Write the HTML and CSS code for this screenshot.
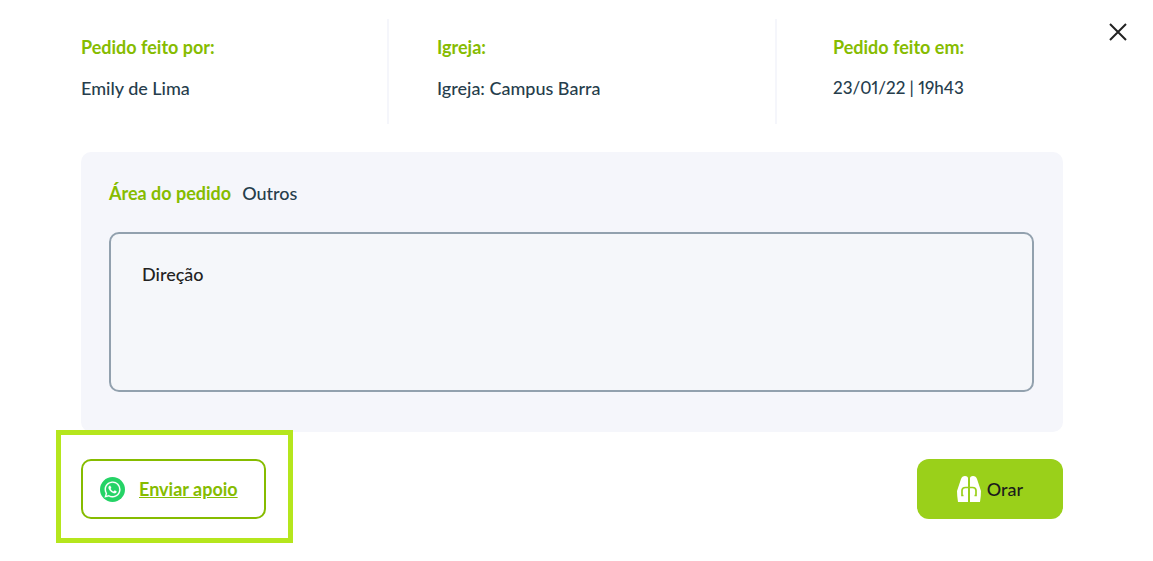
FILE: index.html
```html
<!DOCTYPE html>
<html lang="pt-BR">
<head>
<meta charset="UTF-8" />
<meta name="viewport" content="width=device-width, initial-scale=1.0" />
<title>Pedido de oração</title>
<link rel="stylesheet" href="styles.css">
</head>
<body>
  <main class="modal">
    <button type="button" class="modal-close" aria-label="Fechar">
      <svg width="18" height="18" viewBox="0 0 18 18" fill="none" stroke="currentColor" stroke-width="2"><path d="M1 1l16 16M17 1L1 17"/></svg>
    </button>

    <dl class="info">
      <div class="info-item">
        <dt>Pedido feito por:</dt>
        <dd>Emily de Lima</dd>
      </div>
      <div class="info-item">
        <dt>Igreja:</dt>
        <dd>Igreja: Campus Barra</dd>
      </div>
      <div class="info-item">
        <dt>Pedido feito em:</dt>
        <dd class="date">23/01/22 | 19h43</dd>
      </div>
    </dl>

    <section class="request">
      <div class="area">
        <label class="area-label" for="pedido">Área do pedido</label>
        <span>Outros</span>
      </div>
      <textarea id="pedido" readonly>Direção</textarea>
    </section>

    <div class="actions">
      <div class="highlight">
        <a href="#" class="btn support">
          <!-- whatsapp -->
          <svg width="25" height="25" viewBox="0 0 25 25">
            <circle cx="12.500" cy="12.500" r="12.500" fill="#25d366"/>
            <g transform="translate(4.500 4.500) scale(.670)" fill="#fff" stroke="#fff" stroke-width=".2">
              <path d="M17.472 14.382c-.297-.149-1.758-.867-2.030-.967-.273-.099-.471-.148-.670.150-.197.297-.767.966-.940 1.164-.173.199-.347.223-.644.075-.297-.150-1.255-.463-2.390-1.475-.883-.788-1.480-1.761-1.653-2.059-.173-.297-.018-.458.130-.606.134-.133.298-.347.446-.520.149-.174.198-.298.298-.497.099-.198.050-.371-.025-.520-.075-.149-.669-1.612-.916-2.207-.242-.579-.487-.500-.669-.510-.173-.008-.371-.010-.570-.010-.198 0-.520.074-.792.372-.272.297-1.040 1.016-1.040 2.479 0 1.462 1.065 2.875 1.213 3.074.149.198 2.096 3.200 5.077 4.487.709.306 1.262.489 1.694.625.712.227 1.360.195 1.871.118.571-.085 1.758-.719 2.006-1.413.248-.694.248-1.289.173-1.413-.074-.124-.272-.198-.570-.347"/>
              <path d="M12.051 21.785h-.004a9.870 9.870 0 01-5.031-1.378l-.361-.214-3.741.982.998-3.648-.235-.374a9.860 9.860 0 01-1.510-5.260c.001-5.450 4.436-9.884 9.888-9.884 2.640 0 5.122 1.030 6.988 2.898a9.825 9.825 0 012.893 6.994c-.003 5.450-4.437 9.884-9.885 9.884m8.413-18.297A11.815 11.815 0 0012.050 0C5.495 0 .160 5.335.157 11.892c0 2.096.547 4.142 1.588 5.945L.057 24l6.305-1.654a11.882 11.882 0 005.683 1.448h.005c6.554 0 11.890-5.335 11.893-11.893a11.821 11.821 0 00-3.480-8.413z"/>
            </g>
          </svg>
          <span>Enviar apoio</span>
        </a>
      </div>
      <button type="button" class="btn pray">
        <!-- praying hands -->
        <svg width="24" height="26" viewBox="0 0 24 26">
          <path fill="#fff" d="M11.300 3v23H1Q0 20 0 15L4 3Q5 0 8 0q3 0 3.300 3zM12.700 3v23H23q1-6 1-11L20 3q-1-3-4-3-3 0-3.300 3z"/>
          <path fill="none" stroke="#9ad01a" stroke-width="1.700" d="M12 11.500H8.500q-3.500 0-3.500 3v5h1.500M12 11.500h3.500q3.500 0 3.500 3v5h-1.500"/>
          <path fill="none" stroke="#9ad01a" stroke-width="2" d="M12 2v24"/>
        </svg>
        <span>Orar</span>
      </button>
    </div>
  </main>
</body>
</html>
```

FILE: styles.css
```css
:root {
  --green: #86bc00;
  --lime: #9ad01a;
  --highlight: #b5e61d;
  --navy: #263d4c;
  --panel: #f5f6fb;
}
* { box-sizing: border-box; margin: 0; padding: 0; }
body { background: #ffffff; color: var(--navy); font-family: Lato, sans-serif; font-size: 18px; font-weight: 500; font-variant-numeric: proportional-nums; line-height: 24px; }
.modal { position: relative; padding: 19px 90px 42px 81px; }
.modal-close { position: absolute; top: 23px; right: 26px; width: 18px; height: 18px; border: none; background: none; color: #222222; cursor: pointer; }
.modal-close svg { display: block; }

/* === request info === */
.info { display: grid; grid-template-columns: 308fr 388fr 286fr; margin-bottom: 28px; }
.info-item { height: 105px; padding: 16px 0 0 48px; border-right: 2px solid var(--panel); }
.info-item:first-child { padding-left: 0; }
.info-item:last-child { padding-left: 56px; border-right: none; }
.info dt { color: var(--green); font-weight: 700; margin-bottom: 17px; }
.info .date { font-size: 17px; }

/* === request text === */
.request { background: var(--panel); border-radius: 10px; padding: 29px 29px 40px 28px; margin-bottom: 27px; }
.area { display: flex; gap: 11px; margin-bottom: 27px; }
.area-label { color: var(--green); font-weight: 700; }
textarea { display: block; width: 100%; height: 160px; padding: 28px 31px; border: 2px solid #92a1ae; border-radius: 10px; background: #f5f7fa; color: #222222; font: inherit; resize: none; outline: none; }

/* === buttons === */
.actions { display: flex; justify-content: space-between; }
.btn { display: flex; align-items: center; height: 60px; border-radius: 10px; font: inherit; cursor: pointer; }
.highlight { position: relative; }
.highlight::after { content: ""; position: absolute; inset: -29px -27px -24px -25px; border: 5px solid var(--highlight); pointer-events: none; }
.support { width: 185px; gap: 14px; padding: 0 17px; border: 2px solid var(--green); color: var(--green); font-weight: 700; }
.pray { width: 146px; justify-content: center; gap: 6px; border: none; border-radius: 12px; background: var(--lime); color: #1c1c1c; }
```
